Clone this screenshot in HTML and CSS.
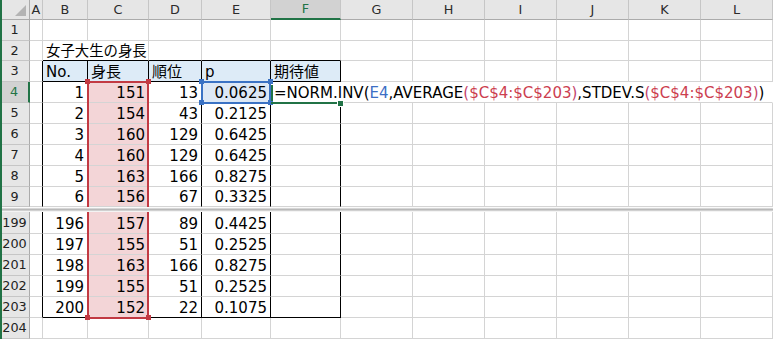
FILE: index.html
```html
<!DOCTYPE html>
<html lang="ja">
<head>
  <meta charset="UTF-8" />
  <title>女子大生の身長</title>
  <link rel="stylesheet" href="styles.css">
</head>
<body>
  <div class="sheet">
    <div class="row hdr">
      <div class="corner"><svg width="12" height="13" viewBox="0 0 12 13"><polygon points="0,12 11,12 11,1" fill="#b4b4b4"/></svg></div>
      <div>A</div><div>B</div><div>C</div><div>D</div><div>E</div><div class="sel">F</div>
      <div>G</div><div>H</div><div>I</div><div>J</div><div>K</div><div>L</div>
    </div>

    <div class="row">
      <div class="rh">1</div><div></div><div></div><div></div><div></div><div></div><div></div>
      <div></div><div></div><div></div><div></div><div></div><div></div>
    </div>

    <div class="row h20">
      <div class="rh">2</div><div></div><div class="span2 bk-b title">女子大生の身長</div><div class="bk-b"></div><div class="bk-b"></div><div class="bk-b"></div>
      <div></div><div></div><div></div><div></div><div></div><div></div>
    </div>

    <div class="row">
      <div class="rh">3</div><div class="bk-r"></div>
      <div class="th bk-r bk-b">No.</div><div class="th bk-r bk-b">身長</div><div class="th bk-r bk-b">順位</div><div class="th bk-r bk-b">p</div><div class="th bk-r bk-b">期待値</div>
      <div></div><div></div><div></div><div></div><div></div><div></div>
    </div>

    <div class="row">
      <div class="rh sel">4</div><div class="bk-r"></div>
      <div class="num bk-r">1</div><div class="num pk bk-r">151</div><div class="num bk-r">13</div><div class="num bl bk-r">0.0625</div>
      <div class="formula">=NORM.INV(<span class="ref-b">E4</span>,AVERAGE<span class="par">(</span><span class="ref-r">$C$4:$C$203</span><span class="par">)</span>,STDEV.S<span class="par">(</span><span class="ref-r">$C$4:$C$203</span><span class="par">)</span>)</div>
    </div>

    <div class="row">
      <div class="rh">5</div><div class="bk-r"></div>
      <div class="num bk-r">2</div><div class="num pk bk-r">154</div><div class="num bk-r">43</div><div class="num bk-r">0.2125</div><div class="bk-r"></div>
      <div></div><div></div><div></div><div></div><div></div><div></div>
    </div>

    <div class="row">
      <div class="rh">6</div><div class="bk-r"></div>
      <div class="num bk-r">3</div><div class="num pk bk-r">160</div><div class="num bk-r">129</div><div class="num bk-r">0.6425</div><div class="bk-r"></div>
      <div></div><div></div><div></div><div></div><div></div><div></div>
    </div>

    <div class="row">
      <div class="rh">7</div><div class="bk-r"></div>
      <div class="num bk-r">4</div><div class="num pk bk-r">160</div><div class="num bk-r">129</div><div class="num bk-r">0.6425</div><div class="bk-r"></div>
      <div></div><div></div><div></div><div></div><div></div><div></div>
    </div>

    <div class="row">
      <div class="rh">8</div><div class="bk-r"></div>
      <div class="num bk-r">5</div><div class="num pk bk-r">163</div><div class="num bk-r">166</div><div class="num bk-r">0.8275</div><div class="bk-r"></div>
      <div></div><div></div><div></div><div></div><div></div><div></div>
    </div>

    <div class="row h20">
      <div class="rh">9</div><div class="bk-r"></div>
      <div class="num bk-r">6</div><div class="num pk bk-r">156</div><div class="num bk-r">67</div><div class="num bk-r">0.3325</div><div class="bk-r"></div>
      <div></div><div></div><div></div><div></div><div></div><div></div>
    </div>

    <div class="split"></div>

    <div class="row h22">
      <div class="rh">199</div><div class="bk-r"></div>
      <div class="num bk-r">196</div><div class="num pk bk-r">157</div><div class="num bk-r">89</div><div class="num bk-r">0.4425</div><div class="bk-r"></div>
      <div></div><div></div><div></div><div></div><div></div><div></div>
    </div>

    <div class="row">
      <div class="rh">200</div><div class="bk-r"></div>
      <div class="num bk-r">197</div><div class="num pk bk-r">155</div><div class="num bk-r">51</div><div class="num bk-r">0.2525</div><div class="bk-r"></div>
      <div></div><div></div><div></div><div></div><div></div><div></div>
    </div>

    <div class="row">
      <div class="rh">201</div><div class="bk-r"></div>
      <div class="num bk-r">198</div><div class="num pk bk-r">163</div><div class="num bk-r">166</div><div class="num bk-r">0.8275</div><div class="bk-r"></div>
      <div></div><div></div><div></div><div></div><div></div><div></div>
    </div>

    <div class="row">
      <div class="rh">202</div><div class="bk-r"></div>
      <div class="num bk-r">199</div><div class="num pk bk-r">155</div><div class="num bk-r">51</div><div class="num bk-r">0.2525</div><div class="bk-r"></div>
      <div></div><div></div><div></div><div></div><div></div><div></div>
    </div>

    <div class="row">
      <div class="rh">203</div><div class="bk-r"></div>
      <div class="num bk-r bk-b">200</div><div class="num pk bk-r bk-b">152</div><div class="num bk-r bk-b">22</div><div class="num bk-r bk-b">0.1075</div><div class="bk-r bk-b"></div>
      <div></div><div></div><div></div><div></div><div></div><div></div>
    </div>

    <div class="row">
      <div class="rh">204</div><div></div><div></div><div></div><div></div><div></div><div></div>
      <div></div><div></div><div></div><div></div><div></div><div></div>
    </div>

    <!-- selection overlays -->
    <div class="edge"></div>
    <div class="range-red top-part"></div>
    <div class="range-red bottom-part"></div>
    <div class="handle red h-tl"></div>
    <div class="handle red h-tr"></div>
    <div class="handle red h-bl"></div>
    <div class="handle red h-br"></div>
    <div class="range-blue"></div>
    <div class="handle blue b-tl"></div>
    <div class="handle blue b-tr"></div>
    <div class="handle blue b-bl"></div>
    <div class="handle blue b-br"></div>
    <div class="active-left"></div>
    <div class="active-bottom"></div>
    <div class="fill-handle"></div>
  </div>
</body>
</html>
```

FILE: styles.css
```css
:root {
  --grid: #d4d4d4;
  --head-bg: #e6e6e6;
  --head-line: #c6c6c6;
  --head-edge: #ababab;
  --green: #217346;
  --red: #c23a43;
  --blue: #3a72c4;
}

body {
  margin: 0;
  background: #fff;
  color: #000;
  font-family: "DejaVu Sans", "Noto Sans CJK JP", sans-serif;
}

.sheet {
  position: relative;
  width: 773px;
  height: 339px;
  overflow: hidden;
}

.row {
  display: grid;
  grid-template-columns: 30px 13px 45px 61px 53px 69px 70px repeat(6, 72px);
  height: 21px;
}

.row.h20 { height: 20px; }
.row.h22 { height: 22px; }

.row > div {
  box-sizing: border-box;
  display: flex;
  align-items: flex-end;
  min-width: 0;
  padding: 0 3px;
  border-right: 1px solid var(--grid);
  border-bottom: 1px solid var(--grid);
  font-size: 15px;
  line-height: 18px;
  white-space: nowrap;
}

.row > .title { font-size: 14.4px; }

/* column headers */
.hdr { height: 20px; }

.hdr > div {
  justify-content: center;
  align-items: center;
  padding: 0;
  background: var(--head-bg);
  border-right-color: var(--head-line);
  border-bottom-color: var(--head-edge);
  font-size: 12.8px;
  color: #2b2b2b;
}

.hdr > div.corner {
  justify-content: flex-end;
  align-items: flex-end;
  padding: 0 2px 2px 0;
  border-right-color: var(--head-edge);
}

.hdr > div.sel {
  background: #d2d2d2;
  color: var(--green);
  border-bottom: 2px solid var(--green);
}

/* row headers */
.row > div.rh {
  justify-content: center;
  align-items: center;
  padding: 0;
  background: var(--head-bg);
  border-right-color: var(--head-edge);
  border-bottom-color: var(--head-line);
  font-size: 12.8px;
  color: #222;
}

.row > div.rh.sel {
  background: #d2d2d2;
  color: var(--green);
  border-right: 2px solid var(--green);
}

/* cells */
.row > .num { justify-content: flex-end; }
.row > .span2 { grid-column: span 2; }
.row > .th { background: #ddebf7; }
.row > .pk { background: #f3d5d7; }
.row > .bl { background: #dde8f5; }
.row > .bk-r { border-right-color: #000; }
.row > .bk-b { border-bottom-color: #000; }

.row > .formula {
  grid-column: span 7;
  border-right-color: transparent;
}

.ref-b { color: #3d6fc4; }
.ref-r { color: #cc4050; }
.par { color: #c4456c; }

.split {
  height: 5px;
  background: linear-gradient(#fafafa 0 1px, #d6d6d6 1px 2px, #b9b9b9 2px 3px, #d0d0d0 3px 4px, #f4f4f4 4px);
}

/* overlays: window edge, reference ranges and the active cell */
.edge {
  position: absolute;
  left: 0;
  top: 0;
  width: 2px;
  height: 339px;
  background: var(--green);
}

.range-red {
  position: absolute;
  left: 87px;
  width: 62px;
  box-sizing: border-box;
  border: 2px solid var(--red);
}

.range-red.top-part {
  top: 81px;
  height: 126px;
  border-bottom: none;
}

.range-red.bottom-part {
  top: 212px;
  height: 107px;
  border-top: none;
}

.range-blue {
  position: absolute;
  left: 201px;
  top: 81px;
  width: 70px;
  height: 23px;
  box-sizing: border-box;
  border: 2px solid var(--blue);
}

.handle {
  position: absolute;
  width: 5px;
  height: 5px;
}

.handle.red { background: var(--red); }
.handle.blue { background: var(--blue); }

.h-tl { left: 85px; top: 79px; }
.h-tr { left: 146px; top: 79px; }
.h-bl { left: 85px; top: 315px; }
.h-br { left: 146px; top: 315px; }

.b-tl { left: 199px; top: 79px; }
.b-tr { left: 268px; top: 79px; }
.b-bl { left: 199px; top: 100px; }
.b-br { left: 268px; top: 100px; }

.active-left {
  position: absolute;
  left: 271px;
  top: 85px;
  width: 2px;
  height: 16px;
  background: var(--green);
}

.active-bottom {
  position: absolute;
  left: 271px;
  top: 102px;
  width: 66px;
  height: 2px;
  background: var(--green);
}

.fill-handle {
  position: absolute;
  left: 337px;
  top: 100px;
  width: 5px;
  height: 5px;
  background: var(--green);
  border: 1px solid #fff;
}
```
